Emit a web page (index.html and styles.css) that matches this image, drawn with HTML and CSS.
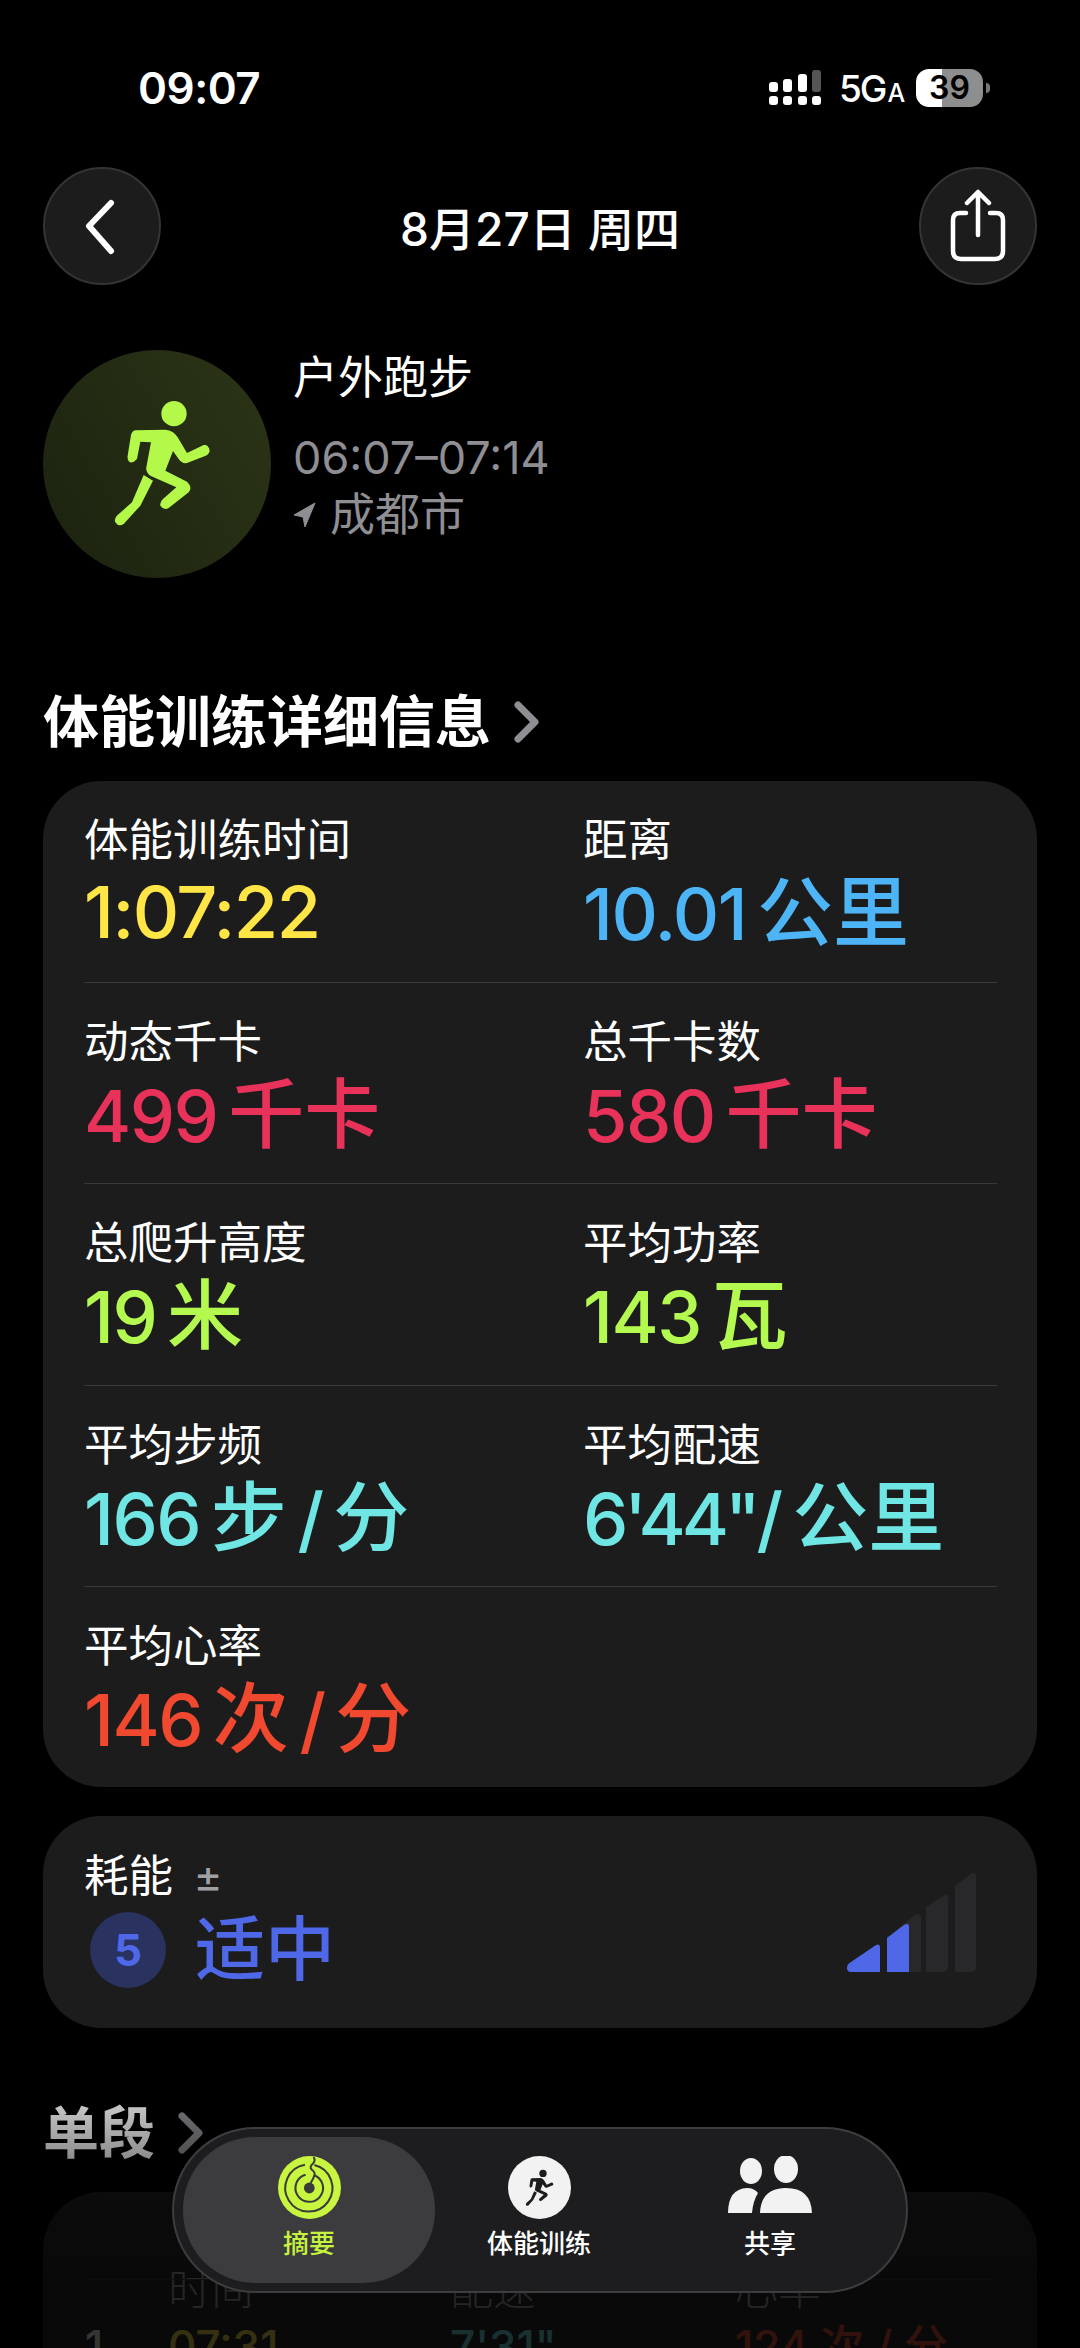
FILE: index.html
```html
<!DOCTYPE html>
<html lang="zh-CN">
<head>
    <meta charset="UTF-8">
    <meta name="viewport" content="width=device-width, initial-scale=1.0">
    <title>户外跑步</title>
    <link rel="stylesheet" href="styles.css">
</head>
<body>
    <svg class="defs" width="0" height="0">
        <symbol id="runner" viewBox="215 160 300 390">
            <circle cx="401" cy="204" r="38"/>
            <path d="M285 254 L375 252 Q400 254 412 275 L440 322 L490 298 Q505 296 508 315 Q506 326 496 330 L440 352 Q425 355 415 340 L398 316 L375 375 L440 408 Q458 425 445 440 L385 487 Q370 495 360 480 Q358 468 368 460 L408 425 L340 395 Q315 385 318 365 L332 290 L300 288 L290 340 Q280 352 268 350 Q260 345 262 330 L272 268 Q275 256 285 254 Z"/>
            <path d="M310 388 L338 405 L300 480 L250 535 Q235 545 225 530 Q220 518 232 508 L275 470 Z"/>
        </symbol>
    </svg>

    <div class="screen">
        <!-- Status bar -->
        <div class="status">
            <span class="clock">09:07</span>
            <div class="status-right">
                <svg class="signal" width="52" height="38" viewBox="0 0 52 38">
                    <rect x="0" y="13" width="9" height="10" rx="3" fill="#fff"/>
                    <rect x="14" y="10" width="9" height="13" rx="3" fill="#fff"/>
                    <rect x="29" y="5" width="9" height="18" rx="3" fill="#fff"/>
                    <rect x="43" y="1" width="9" height="22" rx="3" fill="#555"/>
                    <rect x="0" y="27" width="9" height="9" rx="3" fill="#fff"/>
                    <rect x="14" y="27" width="9" height="9" rx="3" fill="#fff"/>
                    <rect x="29" y="27" width="9" height="9" rx="3" fill="#fff"/>
                    <rect x="43" y="27" width="9" height="9" rx="3" fill="#fff"/>
                </svg>
                <span class="network">5G<small>A</small></span>
                <div class="battery"><span>39</span></div>
                <div class="battery-tip"></div>
            </div>
        </div>

        <!-- Nav header -->
        <div class="topbar">
            <div class="round-btn">
                <svg width="40" height="60" viewBox="0 0 40 60"><path d="M29 7 L7 30 L29 55" fill="none" stroke="#fff" stroke-width="6" stroke-linecap="round" stroke-linejoin="round"/></svg>
            </div>
            <div class="date">8月27日 周四</div>
            <div class="round-btn">
                <svg width="60" height="76" viewBox="0 0 60 76"><path d="M18 25 L12 25 Q5 25 5 32 L5 63 Q5 71 13 71 L47 71 Q55 71 55 63 L55 32 Q55 25 48 25 L42 25 M30 47 L30 5 M19 15 L30 4 L41 15" fill="none" stroke="#fff" stroke-width="4.500" stroke-linecap="round" stroke-linejoin="round"/></svg>
            </div>
        </div>

        <!-- Workout header -->
        <div class="workout">
            <div class="workout-icon">
                <svg class="runner-big" width="100" height="130"><use href="#runner"/></svg>
            </div>
            <div class="workout-info">
                <div class="workout-name">户外跑步</div>
                <div class="workout-time">06:07–07:14</div>
                <div class="workout-place">
                    <svg width="23" height="26" viewBox="0 0 23 26"><path d="M22 1 L1 13 L10 15 L12 25 Z" fill="#8e8e93" stroke="#8e8e93" stroke-width="1" stroke-linejoin="round"/></svg>
                    成都市
                </div>
            </div>
        </div>

        <!-- Details -->
        <div class="section-title">体能训练详细信息
            <svg width="28" height="44" viewBox="0 0 28 44"><path d="M5 5 L22 22 L5 39" fill="none" stroke="#8e8e93" stroke-width="7" stroke-linecap="round" stroke-linejoin="round"/></svg>
        </div>
        <div class="card stats">
            <div class="stat-row">
                <div class="stat"><div class="stat-label">体能训练时间</div><div class="stat-value yellow">1:07:22</div></div>
                <div class="stat"><div class="stat-label">距离</div><div class="stat-value blue">10.01 <span class="unit">公里</span></div></div>
            </div>
            <div class="stat-row">
                <div class="stat"><div class="stat-label">动态千卡</div><div class="stat-value red">499 <span class="unit">千卡</span></div></div>
                <div class="stat"><div class="stat-label">总千卡数</div><div class="stat-value red">580 <span class="unit">千卡</span></div></div>
            </div>
            <div class="stat-row">
                <div class="stat"><div class="stat-label">总爬升高度</div><div class="stat-value green">19 <span class="unit">米</span></div></div>
                <div class="stat"><div class="stat-label">平均功率</div><div class="stat-value green">143 <span class="unit">瓦</span></div></div>
            </div>
            <div class="stat-row">
                <div class="stat"><div class="stat-label">平均步频</div><div class="stat-value cyan">166 <span class="unit">步</span> / <span class="unit">分</span></div></div>
                <div class="stat"><div class="stat-label">平均配速</div><div class="stat-value cyan"><span class="tight">6'44"</span>/ <span class="unit">公里</span></div></div>
            </div>
            <div class="stat-row last">
                <div class="stat"><div class="stat-label">平均心率</div><div class="stat-value orange">146 <span class="unit">次</span> / <span class="unit">分</span></div></div>
            </div>
        </div>

        <!-- Effort -->
        <div class="card effort">
            <div>
                <div class="effort-label">耗能 <span>±</span></div>
                <div class="effort-value"><span class="effort-badge">5</span>适中</div>
            </div>
            <svg class="effort-bars" width="134" height="104" viewBox="844 1870 134 104">
                <path d="M886 1971 L886 1936 L914 1914 Q920 1911 920 1918 L920 1971 Z" fill="#28282a"/>
                <path d="M925 1971 L925 1906 L942 1895 Q947 1892 947 1898 L947 1966 Q947 1971 942 1971 Z" fill="#28282a"/>
                <path d="M954 1971 L954 1885 L970 1873 Q975 1870 975 1876 L975 1966 Q975 1971 970 1971 Z" fill="#28282a"/>
                <path d="M846 1967 Q846 1963 850 1961 L875 1944 Q879 1942 879 1947 L879 1971 L850 1971 Q846 1971 846 1967 Z" fill="#4f68e8"/>
                <path d="M886 1971 L886 1937 L903 1924 Q908 1921 908 1926 L908 1971 Z" fill="#4f68e8"/>
            </svg>
        </div>

        <!-- Splits, mostly hidden behind the tab bar -->
        <div class="section-title splits-title">单段
            <svg width="28" height="44" viewBox="0 0 28 44"><path d="M5 5 L22 22 L5 39" fill="none" stroke="#8e8e93" stroke-width="7" stroke-linecap="round" stroke-linejoin="round"/></svg>
        </div>
        <div class="card splits">
            <div class="split-grid split-head">
                <span></span><span>时间</span><span>配速</span><span>心率</span>
            </div>
            <div class="split-grid split-row">
                <span class="split-num">1</span><span class="yellow">07:31</span><span class="cyan">7'31"</span><span class="orange">124 次 / 分</span>
            </div>
        </div>

        <div class="fade"></div>

        <!-- Tab bar -->
        <div class="tabbar">
            <div class="tab active">
                <svg class="tab-icon" width="63" height="63" viewBox="0 0 187 187">
                    <circle cx="93.500" cy="93.500" r="93.500" fill="#c8f53f"/>
                    <circle cx="93" cy="95" r="16" fill="#3a3a3a"/>
                    <path d="M108 27 A70 70 0 1 1 80 26 M108 57 A41 41 0 1 1 82 55.500 M106 3 Q112 14 104 22 Q92 32 100 40 Q112 50 108 57 Q106 66 97 80" fill="none" stroke="#3a3a3a" stroke-width="6"/>
                </svg>
                <span>摘要</span>
            </div>
            <div class="tab">
                <div class="tab-run"><svg width="29" height="38"><use href="#runner"/></svg></div>
                <span>体能训练</span>
            </div>
            <div class="tab">
                <svg class="tab-icon" width="84" height="63" viewBox="0 0 84 63">
                    <ellipse cx="23" cy="15" rx="11" ry="13" fill="#f2f2f2"/>
                    <ellipse cx="58" cy="13" rx="12" ry="14" fill="#f2f2f2"/>
                    <path d="M0 57 Q0 33 19 32 Q26 32 30 37 Q25 45 24 57 Z" fill="#f2f2f2"/>
                    <path d="M32 57 Q33 32 58 32 Q83 32 84 57 Z" fill="#f2f2f2"/>
                </svg>
                <span>共享</span>
            </div>
        </div>
    </div>
</body>
</html>
```

FILE: styles.css
```css
* {
    box-sizing: border-box;
}
html, body {
    margin: 0;
    background: #000;
}
body {
    font-family: Inter, "Noto Sans CJK SC", sans-serif;
    color: #fff;
}
.defs {
    position: absolute;
}
.screen {
    position: relative;
    width: 1080px;
    height: 2348px;
    overflow: hidden;
    background: #000;
    padding: 0 43px;
}

/* status bar */
.status {
    height: 167px;
    padding: 58px 47px 0 95px;
    display: flex;
    justify-content: space-between;
    align-items: flex-start;
}
.clock {
    font-size: 44px;
    line-height: 60px;
    font-weight: 600;
    letter-spacing: -0.500px;
}
.status-right {
    display: flex;
    align-items: center;
    height: 60px;
}
.signal {
    margin-right: 18px;
}
.network {
    font-size: 37px;
    font-weight: 500;
    letter-spacing: -2px;
    width: 77px;
}
.network small {
    font-size: 25px;
    letter-spacing: 0;
    margin-left: 2px;
}
.battery {
    width: 67px;
    height: 38px;
    border-radius: 13px;
    background: linear-gradient(90deg, #fff 39%, #8e8e8e 39%);
    color: #000;
    font-size: 32px;
    font-weight: 600;
    text-align: center;
    line-height: 38px;
}
.battery-tip {
    width: 4px;
    height: 10px;
    margin-left: 3px;
    border-radius: 0 5px 5px 0;
    background: #777;
}

/* top bar */
.topbar {
    height: 118px;
    display: flex;
    justify-content: space-between;
    align-items: center;
}
.round-btn {
    width: 118px;
    height: 118px;
    border-radius: 50%;
    background: #1c1c1d;
    border: 2px solid #343436;
    display: flex;
    align-items: center;
    justify-content: center;
}
.date {
    font-size: 46px;
    font-weight: 500;
}

/* workout header */
.workout {
    margin-top: 65px;
    display: flex;
    gap: 22px;
}
.workout-icon {
    width: 228px;
    height: 228px;
    border-radius: 50%;
    background: linear-gradient(60deg, #1b2210, #2c3516);
    display: flex;
    align-items: center;
    justify-content: center;
    padding-left: 10px;
}
.runner-big {
    fill: #b4f94a;
}
.workout-name {
    font-size: 45px;
    line-height: 56px;
}
.workout-time {
    font-size: 45px;
    line-height: 56px;
    margin-top: 24px;
    color: #8e8e93;
}
.workout-place {
    font-size: 45px;
    line-height: 58px;
    color: #8e8e93;
    display: flex;
    align-items: center;
    gap: 14px;
}

/* section titles */
.section-title {
    margin-top: 109px;
    font-size: 56px;
    font-weight: 700;
    line-height: 70px;
    display: flex;
    align-items: center;
    gap: 22px;
}
.splits-title {
    margin-top: 70px;
}

/* cards */
.card {
    background: #1c1c1d;
    border-radius: 58px;
}
.stats {
    margin-top: 24px;
    height: 1006px;
    padding: 0 40px 0 41px;
}
.stat-row {
    height: 201.500px;
    padding-top: 33px;
    display: grid;
    grid-template-columns: 499px 1fr;
    border-bottom: 1px solid #38383a;
}
.stat-row.last {
    border-bottom: none;
}
.stat-label {
    font-size: 44.500px;
    line-height: 52px;
}
.stat-value {
    font-size: 72px;
    line-height: 92px;
    font-weight: 500;
    letter-spacing: -1.500px;
    word-spacing: -7px;
}
.tight {
    letter-spacing: -4px;
}
.unit {
    font-size: 76px;
    letter-spacing: 0;
}
.yellow { color: #ffe545; }
.blue { color: #4db4f5; }
.red { color: #e8325a; }
.green { color: #b4f94f; }
.cyan { color: #6fe6e3; }
.orange { color: #f0492f; }

/* effort */
.effort {
    margin-top: 29px;
    height: 212px;
    padding: 34px 58px 0 41px;
    display: flex;
    justify-content: space-between;
}
.effort-label {
    font-size: 44.500px;
    line-height: 52px;
}
.effort-label span {
    color: #a0a0a4;
    font-size: 44px;
    margin-left: 8px;
}
.effort-value {
    margin-top: 10px;
    display: flex;
    align-items: center;
    gap: 29px;
    font-size: 70px;
    line-height: 76px;
    font-weight: 500;
    color: #4f68e8;
}
.effort-badge {
    margin-left: 6px;
    width: 76px;
    height: 76px;
    border-radius: 50%;
    background: #2a3260;
    font-size: 44px;
    font-weight: 700;
    text-align: center;
}
.effort-bars {
    margin-top: 21px;
}

/* splits */
.splits {
    margin-top: 24px;
    height: 400px;
    padding: 69px 42px 0;
}
.split-grid {
    display: grid;
    grid-template-columns: 83px 282px 285px 1fr;
}
.split-head {
    position: relative;
    font-size: 43px;
    line-height: 56px;
    font-weight: 300;
    color: rgba(142, 142, 147, 0.75);
}
.split-head::before {
    content: "";
    position: absolute;
    left: 0;
    right: 0;
    top: 18px;
    height: 1px;
    background: #2a2a2c;
}
.split-row {
    font-size: 44px;
    line-height: 52px;
    font-weight: 500;
    margin-top: 3px;
    opacity: 0.6;
}

.fade {
    position: absolute;
    left: 0;
    right: 0;
    top: 2050px;
    bottom: 0;
    background: linear-gradient(180deg, rgba(0,0,0,0) 0, rgba(0,0,0,0.35) 85px, rgba(0,0,0,0.62) 150px, rgba(0,0,0,0.68) 240px);
}

/* tab bar */
.tabbar {
    position: absolute;
    left: 172px;
    top: 2127px;
    width: 736px;
    height: 166px;
    border-radius: 83px;
    background: #1d1d1f;
    border: 2px solid #3d3d3f;
    padding: 8px 9px;
    display: grid;
    grid-template-columns: 252px 208px 1fr;
}
.tab {
    border-radius: 72px;
    display: flex;
    flex-direction: column;
    align-items: center;
    padding-top: 19px;
    font-size: 26px;
    line-height: 36px;
    font-weight: 500;
}
.tab span {
    margin-top: 7px;
}
.tab.active {
    background: #3c3c3e;
    color: #c5f23f;
}
.tab-icon {
    display: block;
}
.tab-run {
    width: 63px;
    height: 63px;
    border-radius: 50%;
    background: #f2f2f2;
    fill: #1d1d1f;
    display: flex;
    align-items: center;
    justify-content: center;
}
```
